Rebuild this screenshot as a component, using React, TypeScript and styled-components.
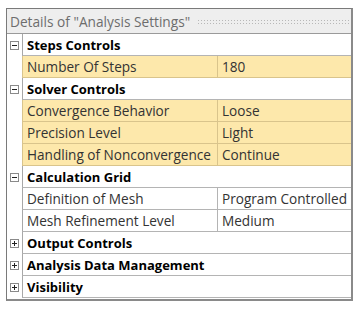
import styled, { createGlobalStyle } from 'styled-components'

const GlobalStyle = createGlobalStyle`
  html, body {
    margin: 0;
    padding: 0;
    background: #ffffff;
  }
  body {
    font-family: 'Open Sans', 'Noto Sans', sans-serif;
  }
`

type Prop = { name: string; value: string }
type Group = { title: string; open: boolean; highlight?: boolean; props: Prop[] }

const groups: Group[] = [
  { title: 'Steps Controls', open: true, highlight: true, props: [{ name: 'Number Of Steps', value: '180' }] },
  {
    title: 'Solver Controls',
    open: true,
    highlight: true,
    props: [
      { name: 'Convergence Behavior', value: 'Loose' },
      { name: 'Precision Level', value: 'Light' },
      { name: 'Handling of Nonconvergence', value: 'Continue' },
    ],
  },
  {
    title: 'Calculation Grid',
    open: true,
    props: [
      { name: 'Definition of Mesh', value: 'Program Controlled' },
      { name: 'Mesh Refinement Level', value: 'Medium' },
    ],
  },
  { title: 'Output Controls', open: false, props: [] },
  { title: 'Analysis Data Management', open: false, props: [] },
  { title: 'Visibility', open: false, props: [] },
]

const Toggle = ({ open }: { open: boolean }) => (
  <ToggleBox>
    <svg width="9" height="9" viewBox="0 0 9 9">
      <rect x="0.5" y="0.5" width="8" height="8" fill="#fff" stroke="#8a8a8a" />
      <line x1="2" y1="4.5" x2="7" y2="4.5" stroke="#222" />
      {!open && <line x1="4.5" y1="2" x2="4.5" y2="7" stroke="#222" />}
    </svg>
  </ToggleBox>
)

const App = () => {
  return (
    <>
      <GlobalStyle />
      <Page>
        <Panel>
          <TitleBar>
            <span>Details of "Analysis Settings"</span>
            <Grip />
          </TitleBar>
          {groups.map(g => (
            <div key={g.title}>
              <Row>
                <Gutter>
                  <Toggle open={g.open} />
                </Gutter>
                <CategoryCell>{g.title}</CategoryCell>
              </Row>
              {g.props.map(p => (
                <Row key={p.name}>
                  <Gutter />
                  <PropCell $hl={!!g.highlight}>
                    <NameCell $hl={!!g.highlight}>{p.name}</NameCell>
                    <ValueCell>{p.value}</ValueCell>
                  </PropCell>
                </Row>
              ))}
            </div>
          ))}
        </Panel>
      </Page>
    </>
  )
}

const Page = styled.div`
  padding: 8px 9px 0 6px;
  width: 362px;
  box-sizing: border-box;
`

const Panel = styled.div`
  border: 1px solid #7a7a7a;
  border-right-width: 2px;
  border-bottom-width: 2px;
  border-right-color: #8a8a8a;
  border-bottom-color: #8a8a8a;
  background: #fff;
  padding-bottom: 1px;
`

const TitleBar = styled.div`
  height: 24px;
  display: flex;
  align-items: center;
  gap: 7px;
  padding-left: 3px;
  background: #eeeeee;
  border-bottom: 1px solid #9a9a9a;
  color: #6d6d6d;
  font-size: 13.7px;
  white-space: nowrap;
`

const Grip = styled.div`
  flex: 1;
  height: 5px;
  margin-right: 2px;
  background-image: radial-gradient(circle, #b8b8b8 0.8px, transparent 1px);
  background-size: 3px 3px;
`

const Row = styled.div`
  display: flex;
  height: 22px;
`

const Gutter = styled.div`
  width: 15px;
  flex: none;
  display: flex;
  align-items: center;
  justify-content: center;
`

const ToggleBox = styled.div`
  display: flex;
`

const CategoryCell = styled.div`
  flex: 1;
  display: flex;
  align-items: center;
  padding-left: 4px;
  font-weight: 700;
  font-size: 13px;
  color: #000;
  border-left: 1px solid #a8a8a8;
  border-bottom: 1px solid #b4b4b4;
  box-sizing: border-box;
`

const PropCell = styled.div<{ $hl: boolean }>`
  flex: 1;
  display: flex;
  background: ${p => (p.$hl ? '#fde8ab' : '#ffffff')};
  border-left: 1px solid ${p => (p.$hl ? '#d9c48c' : '#a8a8a8')};
  border-bottom: 1px solid ${p => (p.$hl ? '#d9c48c' : '#b4b4b4')};
  box-sizing: border-box;
  font-size: 13.6px;
  color: #333;
`

const NameCell = styled.div<{ $hl: boolean }>`
  width: 195px;
  flex: none;
  display: flex;
  align-items: center;
  padding-left: 4px;
  box-sizing: border-box;
  border-right: 1px solid ${p => (p.$hl ? '#d9c48c' : '#b4b4b4')};
  white-space: nowrap;
`

const ValueCell = styled.div`
  flex: 1;
  display: flex;
  align-items: center;
  padding-left: 4px;
  white-space: nowrap;
`

export default App
